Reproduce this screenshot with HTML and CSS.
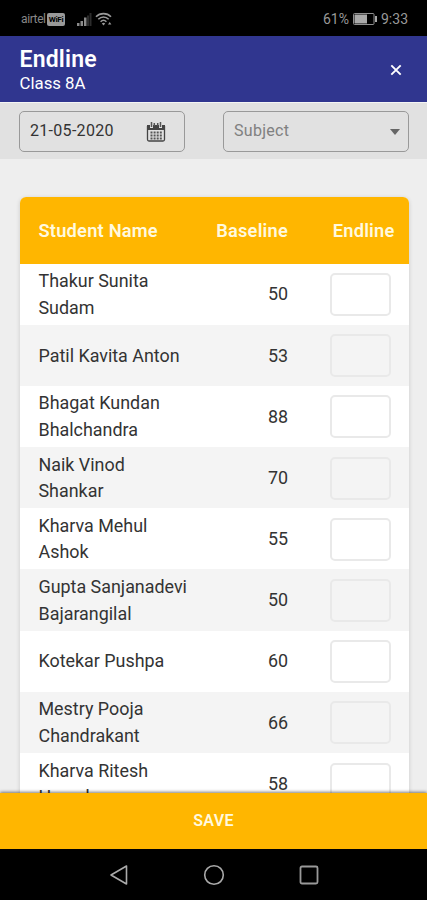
FILE: index.html
```html
<!DOCTYPE html>
<html lang="en">
<head>
<meta charset="utf-8">
<meta name="viewport" content="width=device-width">
<title>Endline</title>
<link rel="stylesheet" href="styles.css">
</head>
<body>
<div class="phone">
  <div class="status">
    <span class="carrier">airtel</span><span class="vowifi">WiFi</span>
    <svg class="signal" width="15" height="13" viewBox="0 0 15 13"><path fill="#8b8b8b" d="M0 10h2.500v3H0zM3.500 8H6v5H3.500zM7 4.500h2.500V13H7z"/><path fill="#2c2c2c" d="M10 2.500h2V13h-2zM12.500 0h2v13h-2z"/></svg>
    <svg class="wifi" width="17" height="14" viewBox="0 0 17 14"><g fill="none" stroke="#999" stroke-width="1.600"><path d="M1 4.800C5 .5 12 .5 16 4.800M3.300 7.300c3-3.100 7.400-3.100 10.400 0M5.600 9.700c1.700-1.700 4.100-1.700 5.800 0"/></g><path fill="#999" d="M6.800 11.500l1.700 2 1.700-2c-1-.9-2.400-.9-3.400 0zM13 12.500l1.700-2.500 1.700 2.500z"/></svg>
    <span class="percent">61%</span>
    <svg class="battery" width="24" height="12" viewBox="0 0 24 12"><rect x=".5" y=".5" width="20.500" height="11" rx="1" fill="none" stroke="#8f8f8f"/><path fill="#a9a9a9" d="M1.500 1.500H14v9H1.500zM22 3h2v6h-2z"/></svg>
    <span class="clock">9:33</span>
  </div>
  <header class="appbar">
    <div><h1>Endline</h1><p>Class 8A</p></div>
    <svg class="close" width="12" height="12" viewBox="0 0 12 12"><path d="M1.300 1.300l9.400 9.400M10.700 1.300l-9.400 9.400" stroke="#fff" stroke-width="1.900"/></svg>
  </header>
  <div class="filters">
    <div class="field date"><span>21-05-2020</span>
      <svg width="20" height="20" viewBox="0 0 20 20"><path d="M1.500 4v13.500q0 1.500 1.500 1.500h14q1.500 0 1.500-1.500V4" fill="none" stroke="#444" stroke-width="1.300"/><path fill="#444" d="M1 3h3v3h3V3h6v3h3V3h3v5H1z"/><path d="M5.500 0v5M14.500 0v5M8.300 1v3M11.700 1v3" stroke="#555" stroke-width="1.500"/><path d="M4.500 10.500h11.500M4.500 13.500h11.500M4.500 16.500h11.500" stroke="#555" stroke-width="1.800" stroke-dasharray="2 1.100"/></svg>
    </div>
    <div class="field subject"><span>Subject</span><i class="caret"></i></div>
  </div>
  <main>
    <div class="card">
      <div class="row head"><span>Student Name</span><span class="num">Baseline</span><span class="end">Endline</span></div>
      <div class="row"><span>Thakur Sunita<br>Sudam</span><span class="num">50</span><b class="box"></b></div>
      <div class="row"><span>Patil Kavita Anton</span><span class="num">53</span><b class="box"></b></div>
      <div class="row"><span>Bhagat Kundan<br>Bhalchandra</span><span class="num">88</span><b class="box"></b></div>
      <div class="row"><span>Naik Vinod<br>Shankar</span><span class="num">70</span><b class="box"></b></div>
      <div class="row"><span>Kharva Mehul<br>Ashok</span><span class="num">55</span><b class="box"></b></div>
      <div class="row"><span>Gupta Sanjanadevi<br>Bajarangilal</span><span class="num">50</span><b class="box"></b></div>
      <div class="row"><span>Kotekar Pushpa</span><span class="num">60</span><b class="box"></b></div>
      <div class="row"><span>Mestry Pooja<br>Chandrakant</span><span class="num">66</span><b class="box"></b></div>
      <div class="row"><span>Kharva Ritesh<br>Haresh</span><span class="num">58</span><b class="box"></b></div>
    </div>
  </main>
  <div class="save">SAVE</div>
  <nav class="nav">
    <svg width="20" height="22" viewBox="0 0 20 22"><path d="M18.500 2v18L3 11z" fill="none" stroke="#aaa" stroke-width="1.600" stroke-linejoin="round"/></svg>
    <svg width="22" height="22" viewBox="0 0 22 22"><circle cx="11" cy="11" r="9.300" fill="none" stroke="#aaa" stroke-width="1.600"/></svg>
    <svg width="20" height="22" viewBox="0 0 20 22"><rect x="1.500" y="2.500" width="17" height="17" rx="1.500" fill="none" stroke="#999" stroke-width="1.800"/></svg>
  </nav>
</div>
</body>
</html>
```

FILE: styles.css
```css
* { box-sizing: border-box; }
body { margin: 0; font-family: Roboto, "Liberation Sans", sans-serif; background: #000; }
h1, p { margin: 0; }
svg { display: block; flex: none; }
.phone { width: 427px; height: 900px; display: flex; flex-direction: column; overflow: hidden; background: #eee; }
.status { flex: none; height: 36px; padding: 2px 19px 0 21px; display: flex; align-items: center; background: #000; color: #999; font-size: 14px; }
.carrier { font-size: 12px; line-height: 14px; width: 26px; letter-spacing: -.4px; color: #888; }
.vowifi { width: 18px; height: 13px; border-radius: 2px; background: #999; color: #000; font-size: 8px; font-weight: 700; line-height: 13px; text-align: center; letter-spacing: -.3px; }
.signal { margin-left: 12px; }
.wifi { margin-left: 3px; }
.percent { margin-left: auto; }
.battery { margin: 0 4px; }
.appbar { flex: none; height: 66px; padding: 10px 25px 0 19.500px; display: flex; justify-content: space-between; background: #30368f; color: #fff; }
h1 { font-size: 23px; line-height: 27px; font-weight: 600; letter-spacing: .2px; }
.appbar p { font-size: 16.800px; line-height: 20px; }
.close { margin-top: 18px; }
.filters { flex: none; height: 57px; padding: 8px 18px 0 19px; display: flex; justify-content: space-between; background: #e1e1e1; border-top: 1px solid #f4f4f4; }
.field { height: 41px; border: 1px solid #999; border-radius: 5px; display: flex; align-items: center; justify-content: space-between; font-size: 16px; }
.date { width: 166px; padding: 0 18px 0 10px; color: #333; letter-spacing: .3px; }
.subject { width: 186px; padding: 0 8px 0 10px; color: #808080; letter-spacing: .3px; }
.field span { position: relative; top: -1px; }
.caret { border: 5px solid transparent; border-top: 6px solid #666; border-bottom: 0; }
main { flex: 1; min-height: 0; padding: 38px 18px 0 19.500px; overflow: hidden; }
.card { border-radius: 6px; overflow: hidden; background: #fff; box-shadow: 0 1px 4px rgba(0,0,0,.16); }
.row { height: 61.200px; padding: 1px 18px 0 19px; display: grid; grid-template-columns: 160.500px 89px 1fr; align-items: center; font-size: 17.900px; line-height: 26.500px; color: #333; background: #fff; white-space: nowrap; }
.row:nth-child(odd) { background: #f4f4f4; }
.row.head { height: 66.500px; padding-right: 14.500px; background: #ffb600; color: #fff9df; font-size: 18.300px; font-weight: 600; letter-spacing: .2px; }
.num { text-align: right; }
.end { justify-self: end; }
.box { justify-self: end; width: 61px; height: 43px; border: 2px solid #e9e9e9; border-radius: 5px; }
.save { flex: none; height: 56px; position: relative; background: #ffb600; color: #fff9df; font-size: 16px; font-weight: 600; letter-spacing: .3px; line-height: 56px; text-align: center; box-shadow: 0 -1px 3px rgba(0,0,0,.5); }
.nav { flex: none; height: 51px; padding: 0 108px; background: #000; display: flex; align-items: center; justify-content: space-between; }
```
